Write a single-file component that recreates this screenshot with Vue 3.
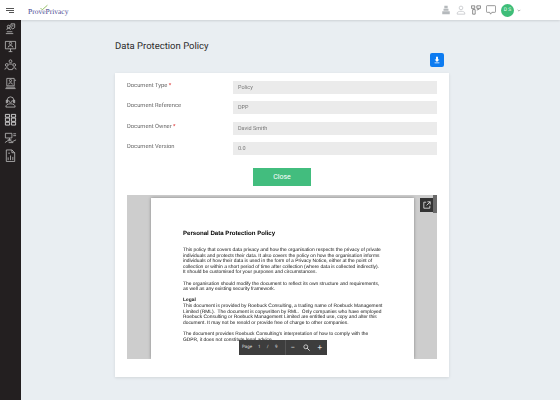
<template>
  <div class="page">
    <header class="topbar">
      <div class="burger"><i></i><i></i><i></i></div>
      <div class="logo">
        <span>Prove</span><span>Privacy</span>
        <svg class="tick" viewBox="0 0 14 10" width="8" height="7">
          <path d="M1 6l3 3 9-8" fill="none" stroke="#7cb342" stroke-width="1.400" />
        </svg>
      </div>
      <div class="top-icons">
        <svg viewBox="0 0 12 12" width="10" height="10">
          <path fill="#b5b9bc" d="M4 1h4v3H4zM3 4.500h6v2.500H3zM1.500 7.500h9V11h-9z" />
        </svg>
        <svg viewBox="0 0 12 12" width="10" height="10">
          <circle cx="6" cy="3.500" r="2.200" fill="none" stroke="#c4c7ca" />
          <path d="M1.500 11V9.500c0-1 2-2 4.500-2s4.500 1 4.500 2V11z" fill="none" stroke="#c4c7ca" />
        </svg>
        <svg viewBox="0 0 12 12" width="10" height="10">
          <path d="M.5 1h4v3h-4zM7 1h4.500v3H7zM2 5.500h3V11H2zM7 6l3-1" fill="none" stroke="#777" />
        </svg>
        <svg viewBox="0 0 12 12" width="10" height="10">
          <path d="M1.500.8h9a1 1 0 0 1 1 1v6a1 1 0 0 1-1 1H7L5.500 11 4.500 8.800h-3a1 1 0 0 1-1-1v-6a1 1 0 0 1 1-1z" fill="none" stroke="#666" stroke-width=".8" />
        </svg>
        <span class="avatar">D S</span>
        <svg class="chevron" viewBox="0 0 6 4" width="4" height="3">
          <path d="M1 1l2 2 2-2" fill="none" stroke="#888" />
        </svg>
      </div>
    </header>

    <div class="body">
      <aside class="sidebar">
        <svg v-for="(icon, i) in sideIcons" :key="i" :class="{ lit: i === 5 }" viewBox="0 0 14 14" width="13" height="13">
          <path :d="icon" />
        </svg>
      </aside>

      <main class="content">
        <div class="title-row">
          <h1>Data Protection Policy</h1>
          <button class="download">
            <svg viewBox="0 0 10 10" width="8" height="8">
              <path fill="#fff" d="M3.800 1h2.400v3.500H8L5 7.500 2 4.500h1.800zM2 8h6v1H2z" />
            </svg>
          </button>
        </div>

        <section class="card">
          <div v-for="f in fields" :key="f.label" class="row">
            <label>{{ f.label }}<em v-if="f.required"> *</em></label>
            <div class="value">{{ f.value }}</div>
          </div>

          <div class="actions"><button class="close">Close</button></div>

          <div class="viewer">
            <div class="sheet">
              <h2>Personal Data Protection Policy</h2>
              <p v-for="(para, i) in paragraphs" :key="i">
                <span v-for="line in para" :key="line" :class="{ bold: line === 'Legal' }">{{ line }}</span>
              </p>
            </div>
            <button class="popout">
              <svg viewBox="0 0 10 10" width="8" height="8">
                <path d="M4 1.500H1v7.500h7.500V6M5.500 1h3.500v3.500M9 1L4.500 5.500" fill="none" stroke="#eee" stroke-width="1" />
              </svg>
            </button>
            <div class="pager">
              <span class="pg">Page</span>
              <span class="num">1</span>
              <span class="num">/</span>
              <span class="num">9</span>
              <span class="sep"></span>
              <span class="op">&minus;</span>
              <span class="op">
                <svg viewBox="0 0 10 10" width="7" height="7">
                  <circle cx="4" cy="4" r="2.800" fill="none" stroke="#ddd" stroke-width="1.200" />
                  <path d="M6 6l3.500 3.500" stroke="#ddd" stroke-width="1.400" />
                </svg>
              </span>
              <span class="op">+</span>
            </div>
          </div>
        </section>
      </main>
    </div>
  </div>
</template>

<script setup>
const fields = [
  { label: 'Document Type', value: 'Policy', required: true },
  { label: 'Document Reference', value: 'DPP' },
  { label: 'Document Owner', value: 'David Smith', required: true },
  { label: 'Document Version', value: '0.0' }
]

const paragraphs = [
  [
    'This policy that covers data privacy and how the organisation respects the privacy of private',
    'individuals and protects their data. It also covers the policy on how the organisation informs',
    'individuals of how their data is used in the form of a Privacy Notice, either at the point of',
    'collection or within a short period of time after collection (where data is collected indirectly).',
    'It should be customised for your purposes and circumstances.'
  ],
  [
    'The organisation should modify the document to reflect its own structure and requirements,',
    'as well as any existing security framework.'
  ],
  [
    'Legal',
    'This document is provided by Roebuck Consulting, a trading name of Roebuck Management',
    'Limited (RML).  The document is copywritten by RML.  Only companies who have employed',
    'Roebuck Consulting or Roebuck Management Limited are entitled use, copy and alter this',
    'document. It may not be resold or provide free of charge to other companies.'
  ],
  [
    "The document provides Roebuck Consulting's interpretation of how to comply with the",
    'GDPR, it does not constitute legal advice.'
  ]
]

// line icons of the left menu, top to bottom
const sideIcons = [
  'M3 8.500a2 2 0 1 1 4 0M5 6.500a1.500 1.500 0 1 0 0-3 1.500 1.500 0 0 0 0 3M2 12.500h8M3 10.500h6M7.500 2h4v4l-2 1.500-2-1.500zM9.500 3v2',
  'M1.500 1.500h11v8h-11zM5 12.500h4M7 9.500v3M7 5a1.300 1.300 0 1 0 0-2.600A1.300 1.300 0 0 0 7 5M4.500 8a2.500 2 0 0 1 5 0',
  'M7 5a1.500 1.500 0 1 0 0-3 1.500 1.500 0 0 0 0 3M3 9a1.500 1.500 0 1 0 0-3 1.500 1.500 0 0 0 0 3M11 9a1.500 1.500 0 1 0 0-3 1.500 1.500 0 0 0 0 3M1 12.500a2 2 0 0 1 4 0M9 12.500a2 2 0 0 1 4 0M5 12.500h4M5 6.500h4',
  'M3 1.500h8v8H3zM7 5a1.200 1.200 0 1 0 0-2.400A1.200 1.200 0 0 0 7 5M5 8a2 1.800 0 0 1 4 0M1.500 12.500h11M2 11h10M11.500 3.500h1.500',
  'M3.500 8V5.500a3.500 3.500 0 0 1 7 0V8M5 5.500a2 2.500 0 0 0 4 0M2.500 5.500h1v3h-1zM10.500 5.500h1v3h-1zM2 13a5 3.500 0 0 1 10 0z',
  'M1.500 1.500h4.500v3H1.500zM8 1.500h4.500v3H8zM1.500 5.500H6V9H1.500zM8 5.500h4.500V9H8zM1.500 10h4.500v3H1.500zM8 10h4.500v3H8z',
  'M1.500 2.500h7v5h-7zM4 9.500h4M6 7.500v2M10 3h3M10 5h3M1 12.500l3-2h3l2 1 4-2M5 12.500h5',
  'M2.500 1h6l3 3v9.500h-9zM8.500 1v3h3M4.500 12v-3M7 12V7M9.500 12V8.500M4.500 4.500h2'
]
</script>

<style>
html, body { margin: 0; overflow: hidden; }
</style>

<style scoped>
.page {
  width: 560px;
  height: 400px;
  display: flex;
  flex-direction: column;
  background: #e9eef2;
  font-family: Roboto, "Liberation Sans", sans-serif;
  text-rendering: geometricPrecision;
  overflow: hidden;
}

.topbar {
  height: 20px;
  flex-shrink: 0;
  display: flex;
  align-items: center;
  background: #fff;
  box-shadow: 0 1px 2px rgba(0, 0, 0, 0.12);
  position: relative;
  z-index: 1;
}

.burger {
  width: 8px;
  margin-left: 6px;
  display: flex;
  flex-direction: column;
  align-items: flex-end;
  gap: 1px;
}

.burger i {
  display: block;
  width: 100%;
  height: 1px;
  background: #555;
}

.burger i:last-child { width: 5px; }

.logo {
  position: relative;
  margin-left: 14px;
  margin-top: 2px;
  font-family: "Liberation Serif", serif;
  font-size: 7.500px;
  color: #4b4b92;
}

.tick {
  position: absolute;
  left: 12px;
  top: -3px;
}

.top-icons {
  margin-left: auto;
  margin-right: 39px;
  display: flex;
  align-items: center;
  gap: 5px;
}

.avatar {
  width: 13px;
  height: 13px;
  border-radius: 50%;
  background: #3ebd78;
  color: #eafff2;
  font-size: 5px;
  display: flex;
  align-items: center;
  justify-content: center;
}

.chevron { margin-left: -2px; }

.body {
  flex: 1;
  display: flex;
  min-height: 0;
}

.sidebar {
  width: 21px;
  flex-shrink: 0;
  background: #231f20;
  display: flex;
  flex-direction: column;
  align-items: center;
  gap: 5.200px;
  padding-top: 2px;
}

.sidebar svg {
  fill: none;
  stroke: #c8c8c8;
  stroke-width: 0.8;
}

.sidebar svg.lit { stroke: #e6e6e6; stroke-width: 0.9; }

.content {
  flex: 1;
  min-width: 0;
  padding: 0 111px 0 94px;
}

.title-row {
  height: 53px;
  display: flex;
  justify-content: space-between;
  padding-right: 5px;
  box-sizing: border-box;
}

h1 {
  margin: 20px 0 0;
  font-size: 9.500px;
  font-weight: 400;
  line-height: 13px;
  color: #2b2b2b;
}

.download {
  width: 14px;
  height: 14px;
  margin-top: 33px;
  padding: 0;
  border: 0;
  border-radius: 2px;
  background: #0d7bf0;
  display: flex;
  align-items: center;
  justify-content: center;
}

.card {
  background: #fff;
  height: 304px;
  padding: 8px 12px;
  box-sizing: border-box;
  box-shadow: 0 1px 3px rgba(0, 0, 0, 0.1);
}

.row {
  display: flex;
  align-items: flex-start;
  height: 20.300px;
}

label {
  width: 106px;
  font-size: 5.800px;
  line-height: 10px;
  color: #666;
  will-change: transform;
}

label em {
  color: #e04040;
  font-style: normal;
}

.value {
  flex: 1;
  height: 13px;
  padding-left: 5px;
  background: #ebebeb;
  font-size: 5.500px;
  line-height: 14px;
  color: #777;
  will-change: transform;
}

.actions {
  display: flex;
  justify-content: center;
  margin-top: 6px;
}

.close {
  width: 58px;
  height: 18px;
  padding: 0;
  border: 0;
  background: #42bd7e;
  color: #fff;
  font-family: inherit;
  font-size: 7px;
}

.viewer {
  position: relative;
  height: 164px;
  margin-top: 9px;
  padding: 3px 23px 0 24px;
  box-sizing: border-box;
  background: #cdcdcd;
  overflow: hidden;
}

.sheet {
  height: 100%;
  padding: 32px 0 0 32px;
  box-sizing: border-box;
  background: #fff;
  box-shadow: 0 0 3px rgba(0, 0, 0, 0.35);
  color: #111;
  font-family: "Liberation Sans", sans-serif;
  font-size: 4.880px;
  line-height: 5.600px;
  overflow: hidden;
  will-change: transform;
}

.sheet h2 {
  margin: 0 0 10px;
  font-size: 6.100px;
  line-height: 8px;
  color: #000;
}

.sheet p { margin: 0 0 5.600px; }

.sheet span {
  display: block;
  white-space: pre;
}

.sheet .bold { font-weight: 700; }

.popout {
  position: absolute;
  top: 3px;
  right: 4px;
  width: 13px;
  height: 14px;
  padding: 0;
  border: 0;
  background: #333;
  display: flex;
  align-items: center;
  justify-content: center;
}

.popout::after {
  content: "";
  position: absolute;
  top: -3px;
  left: 13px;
  width: 4px;
  height: 18px;
  background: #6a6a6a;
}

.pager {
  position: absolute;
  left: 112px;
  bottom: 4px;
  width: 88px;
  height: 15px;
  box-sizing: border-box;
  padding-left: 3px;
  background: #3d3d3d;
  color: #ddd;
  display: flex;
  align-items: center;
  font-size: 4.500px;
}

.pg { width: 13px; }

.num {
  width: 8.500px;
  text-align: center;
}

.sep {
  width: 1px;
  height: 100%;
  margin-left: 4.500px;
  background: #555;
}

.op {
  width: 13.500px;
  display: flex;
  justify-content: center;
  font-size: 8px;
  line-height: 8px;
}
</style>
